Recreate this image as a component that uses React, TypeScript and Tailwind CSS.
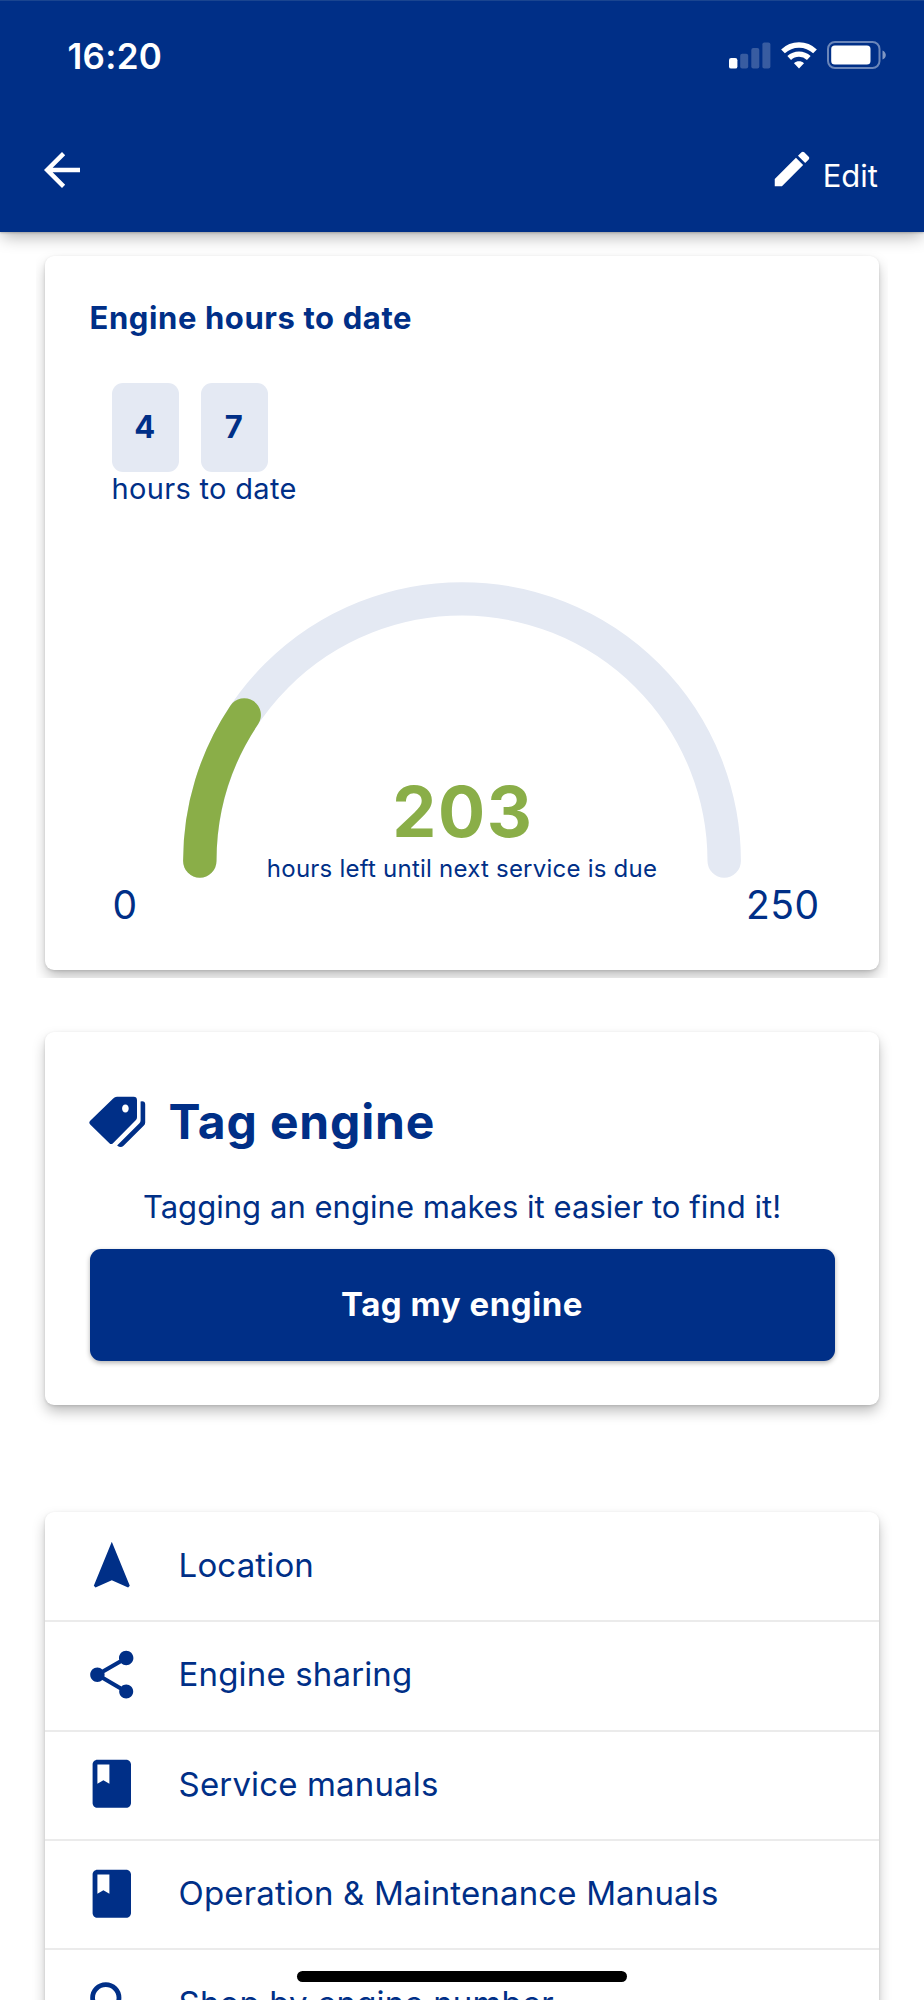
import React from "react";
import type { ReactNode } from "react";
import { MdArrowBack, MdClass, MdEdit, MdNavigation, MdSearch, MdShare } from "react-icons/md";

const CARD_SHADOW = "shadow-[0_7px_14px_-1px_rgba(0,0,0,0.27),0_1px_3px_rgba(0,0,0,0.12)]";

function SignalIcon() {
  return (
    <svg width="42" height="27" viewBox="0 0 42 27" fill="#fff">
      <rect x="0" y="16" width="8.4" height="10.6" rx="2.2" />
      <rect x="11.2" y="11.7" width="8" height="14.9" rx="2" opacity=".22" />
      <rect x="22.3" y="6" width="8" height="20.6" rx="2" opacity=".22" />
      <rect x="33.4" y="0.6" width="8" height="26" rx="2" opacity=".22" />
    </svg>
  );
}

function WifiIcon() {
  return (
    <svg width="36" height="27" viewBox="0 0 36 27" fill="none" stroke="#fff" strokeWidth="5.4">
      <path d="M2 9.4C11 .8 25 .8 34 9.4" />
      <path d="M8.2 16C13.8 10.8 22.2 10.8 27.8 16" />
      <path d="M18 26.4l-5-5.2c2.8-2.5 7.2-2.5 10 0z" fill="#fff" stroke="none" />
    </svg>
  );
}

function BatteryIcon() {
  return (
    <svg width="60" height="28" viewBox="0 0 60 28" fill="none">
      <rect x="1" y="1" width="51.5" height="26" rx="7" stroke="#fff" strokeOpacity=".42" strokeWidth="2" />
      <rect x="4.2" y="4.4" width="39.3" height="19.2" rx="3.6" fill="#fff" />
      <path d="M55.5 9.4c4.4 1.9 4.4 7.3 0 9.2z" fill="#fff" fillOpacity=".5" />
    </svg>
  );
}

function TagsIcon() {
  return (
    <svg width="57" height="52" viewBox="0 0 57 52" fill="#002f87">
      <path
        fillRule="evenodd"
        d="M28 .8h16.6q3.4 0 3.4 3.4v17q0 1.8-1.3 3.1L24 47.2q-1.8 1.8-3.6 0L1.2 28.4q-1.8-1.8 0-3.6L24.2 2.4Q25.8.8 28 .8zM36.4 8.4c-4.4 0-4.4 8 0 8s4.4-8 0-8z"
      />
      <path d="M51.6 5.4q4.6-.8 4.6 3v18q0 1.8-1.3 3.1L34.3 50q-2.7 2.4-6.2-.6l22.3-22.2q1.2-1.2 1.2-3z" />
    </svg>
  );
}

function Gauge({ value, max }: { value: number; max: number }) {
  const angle = (value / max) * Math.PI;
  const x = 279 - 262.2 * Math.cos(angle);
  const y = 279 - 262.2 * Math.sin(angle);
  return (
    <div className="relative flex h-[301px] w-[558px] flex-col items-center justify-end">
      <svg className="absolute left-0 top-0" width="558" height="297" fill="none" strokeWidth="33.4" strokeLinecap="round">
        <path d="M16.8 279A262.2 262.2 0 0 1 541.2 279" stroke="#e4e9f3" />
        <path d={`M16.8 279A262.2 262.2 0 0 1 ${x} ${y}`} stroke="#8aae48" />
      </svg>
      <span className="relative -mr-[2px] text-[70px] font-bold leading-[70px] tracking-[1.6px] text-[#8aae48]">203</span>
      <span className="relative mt-[7px] -mb-px whitespace-nowrap text-[24px] leading-[30px] tracking-[0.23px]">
        hours left until next service is due
      </span>
    </div>
  );
}

function Digit({ children }: { children: string }) {
  return (
    <span className="flex h-[89px] w-[67px] items-center justify-center rounded-[11px] bg-[#e4e9f3] pb-[1px] pr-[1px] text-[31px] font-bold">
      {children}
    </span>
  );
}

function MenuRow({ icon, label, last = false }: { icon: ReactNode; label: string; last?: boolean }) {
  return (
    <li
      className={
        last
          ? "flex h-[109.3px] items-center pl-[38px]"
          : "flex h-[109.3px] items-center border-b-2 border-[#ebebeb] pl-[38px]"
      }
    >
      <span className="pb-[2px]">{icon}</span>
      <span className="ml-[38px] pb-[3px] text-[33px] leading-[40px] tracking-[0.15px]">{label}</span>
    </li>
  );
}

export default function App() {
  return (
    <div className="relative flex h-[2000px] w-[924px] flex-col overflow-hidden bg-white font-['Inter',sans-serif] text-[#002f87]">
      <header className="relative z-10 h-[232px] shrink-0 border-t border-[#1a4590] bg-[#002f87] text-white shadow-[0_6px_16px_-2px_rgba(0,0,0,0.32),0_1px_2px_rgba(0,0,0,0.2)]">
        <div className="flex items-start justify-between pl-[67.5px] pr-[37px] pt-[34px]">
          <span className="text-[35px] font-semibold leading-[42px] tracking-[0.3px]">16:20</span>
          <div className="flex items-center pt-[6px]">
            <SignalIcon />
            <span className="ml-[10px]">
              <WifiIcon />
            </span>
            <span className="ml-[10px]">
              <BatteryIcon />
            </span>
          </div>
        </div>
        <div className="flex items-start justify-between pl-[35px] pr-[46px] pt-[66px]">
          <MdArrowBack size={54} />
          <div className="flex items-start pt-[3px]">
            <MdEdit size={46} />
            <span className="ml-[7.5px] mt-[12px] text-[31px] leading-[36px]">Edit</span>
          </div>
        </div>
      </header>

      <section className="mx-[36px] h-[746px] shrink-0 overflow-hidden px-[9px] pt-[24px]">
        <div className={`flex h-[714px] flex-col rounded-[9px] bg-white pt-[44px] ${CARD_SHADOW}`}>
          <h2 className="pl-[44.5px] text-[31px] font-bold leading-[36px] tracking-[0.6px]">Engine hours to date</h2>
          <div className="flex gap-[22px] pl-[66.7px] pt-[47px]">
            <Digit>4</Digit>
            <Digit>7</Digit>
          </div>
          <p className="pl-[66.5px] text-[29px] leading-[34px] tracking-[0.32px]">hours to date</p>
          <div className="mt-[76px] flex justify-center">
            <Gauge value={47} max={250} />
          </div>
          <div className="flex justify-between pl-[67.5px] pr-[59.5px] text-[39px] leading-[44px] tracking-[0.5px]">
            <span>0</span>
            <span>250</span>
          </div>
        </div>
      </section>

      <section
        className={`mx-[45px] mt-[54px] flex h-[373px] shrink-0 flex-col rounded-[9px] bg-white px-[44.5px] pt-[61px] ${CARD_SHADOW}`}
      >
        <div className="flex items-start">
          <div className="-ml-px pt-[3px]">
            <TagsIcon />
          </div>
          <h2 className="ml-[23px] text-[48px] font-bold leading-[58px] tracking-[0.83px]">Tag engine</h2>
        </div>
        <p className="mt-[38px] whitespace-nowrap text-center text-[31px] leading-[36px] tracking-[0.04px]">
          Tagging an engine makes it easier to find it!
        </p>
        <button className="mt-[24px] h-[112px] rounded-[11px] bg-[#002f87] text-[33px] font-bold tracking-[0.55px] text-white shadow-[0_2px_5px_rgba(0,0,0,0.3)]">
          Tag my engine
        </button>
      </section>

      <ul className={`mx-[45px] mt-[107px] shrink-0 rounded-t-[9px] bg-white pt-px ${CARD_SHADOW}`}>
        <MenuRow icon={<MdNavigation size={57.6} />} label="Location" />
        <MenuRow icon={<MdShare size={57.6} />} label="Engine sharing" />
        <MenuRow icon={<MdClass size={57.6} />} label="Service manuals" />
        <MenuRow icon={<MdClass size={57.6} />} label="Operation & Maintenance Manuals" />
        <MenuRow icon={<MdSearch size={57.6} />} label="Shop by engine number" last />
      </ul>

      <div className="absolute bottom-[18px] left-[297px] h-[11.5px] w-[330px] rounded-full bg-black" />
    </div>
  );
}
